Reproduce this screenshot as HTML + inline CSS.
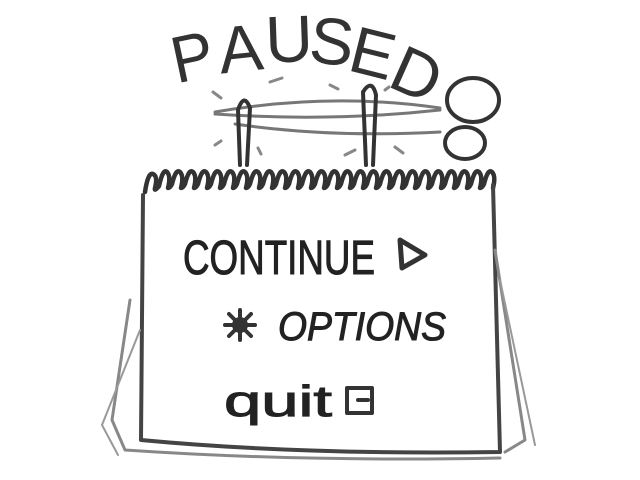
<!DOCTYPE html><html><head><style>body{margin:0;background:#fff}svg{display:block}</style></head><body>
<svg width="640" height="480" viewBox="0 0 640 480" xmlns="http://www.w3.org/2000/svg">
<g fill="none" stroke="#333" stroke-width="4" stroke-linecap="round" stroke-linejoin="round">
<path d="M215 112 Q330 92 440 108" stroke="#777" stroke-width="3"/>
<path d="M215 114 Q330 122 440 110" stroke="#777" stroke-width="3"/>
<path d="M235 124 Q330 138 440 132" stroke="#777" stroke-width="3"/>
<path d="M240 165 L238 110 Q244 92 250 108 L247 165" stroke="#333"/>
<path d="M366 165 L363 92 Q372 78 376 95 L373 165"/>
<ellipse cx="473" cy="100" rx="26" ry="22"/>
<ellipse cx="465" cy="143" rx="20" ry="16"/>
<g stroke="#888" stroke-width="3"><path d="M213 92 l8 6"/><path d="M270 82 l12 -4"/><path d="M330 85 l8 4"/><path d="M385 90 l4 -3"/><path d="M215 145 l6 -4"/><path d="M258 148 l3 6"/><path d="M345 155 l10 -5"/><path d="M395 147 l8 6"/></g>
<path d="M145 192 q3 -20 8 -18 q5 2 2 14 q-1 4 4 -2 q4 -18 8 -14 q4 4 1 16 q2 0 4 -4 q4 -16 8 -12 q4 4 1 16 q2 0 4 -4 q4 -16 8 -12 q4 4 1 16 q2 0 4 -4 q4 -16 8 -12 q4 4 1 16 q2 0 4 -4 q4 -16 8 -12 q4 4 1 16 q2 0 4 -4 q4 -16 8 -12 q4 4 1 16 q2 0 4 -4 q4 -16 8 -12 q4 4 1 16 q2 0 4 -4 q4 -16 8 -12 q4 4 1 16 q2 0 4 -4 q4 -16 8 -12 q4 4 1 16 q2 0 4 -4 q4 -16 8 -12 q4 4 1 16 q2 0 4 -4 q4 -16 8 -12 q4 4 1 16 q2 0 4 -4 q4 -16 8 -12 q4 4 1 16 q2 0 4 -4 q4 -16 8 -12 q4 4 1 16 q2 0 4 -4 q4 -16 8 -12 q4 4 1 16 q2 0 4 -4 q4 -16 8 -12 q4 4 1 16 q2 0 4 -4 q4 -16 8 -12 q4 4 1 16 q2 0 4 -4 q4 -16 8 -12 q4 4 1 16 q2 0 4 -4 q4 -16 8 -12 q4 4 1 16 q2 0 4 -4 q4 -16 8 -12 q4 4 1 16 q2 0 4 -4 q4 -16 8 -12 q4 4 1 16 q2 0 4 -4 q4 -16 8 -12 q4 4 1 16 q2 0 4 -4 q4 -16 8 -12 q4 4 1 16 q2 0 4 -4 q4 -16 8 -12 q4 4 1 16 q2 0 4 -4 q4 -16 8 -12 q4 4 1 16 q2 0 4 -4 q4 -16 8 -12 q4 4 1 16 q2 0 4 -4 q4 -16 8 -12 q4 4 1 16" stroke-width="4.5"/>
<path d="M143 195 L141 440 Q300 455 500 452 L493 185" stroke="#444"/>
<path d="M130 300 L112 420 L125 450 Q300 462 500 458" stroke="#888" stroke-width="3"/>
<path d="M140 330 L102 425 L118 455" stroke="#999" stroke-width="2"/>
<path d="M495 250 L525 440 L505 452" stroke="#888" stroke-width="3"/>
<path d="M500 280 L535 445" stroke="#999" stroke-width="2"/>
<path d="M400 240 L402 268 L425 255 Z" stroke-width="5"/>
<g stroke-width="4"><path d="M240 310 v30"/><path d="M225 325 h30"/><path d="M229 314 l22 22"/><path d="M251 314 l-22 22"/><circle cx="240" cy="325" r="6"/></g>
<rect x="347" y="388" width="25" height="25" stroke-width="4"/><path d="M358 400 h10" stroke-width="4"/>
</g>
<g font-family="Liberation Sans, sans-serif" fill="#333" font-size="66">
<text x="170" y="80" transform="rotate(-12 190 50)" textLength="42" lengthAdjust="spacingAndGlyphs">P</text>
<text x="218" y="72" transform="rotate(-6 235 45)">A</text>
<text x="265" y="62" transform="rotate(-2 285 35)">U</text>
<text x="310" y="64" transform="rotate(6 330 40)">S</text>
<text x="352" y="75" transform="rotate(14 370 48)">E</text>
<text x="395" y="98" transform="rotate(24 420 70)">D</text>
</g>
<g font-family="Liberation Sans, sans-serif" fill="#222" stroke="#222" stroke-width="1">
<text x="183" y="274" font-size="48" textLength="192" lengthAdjust="spacingAndGlyphs">CONTINUE</text>
<text x="278" y="340" font-size="40" font-style="italic" textLength="168" lengthAdjust="spacingAndGlyphs">OPTIONS</text>
<text x="224" y="416" font-size="44" textLength="108" lengthAdjust="spacingAndGlyphs">quit</text>
</g>
</svg>
</body></html>
